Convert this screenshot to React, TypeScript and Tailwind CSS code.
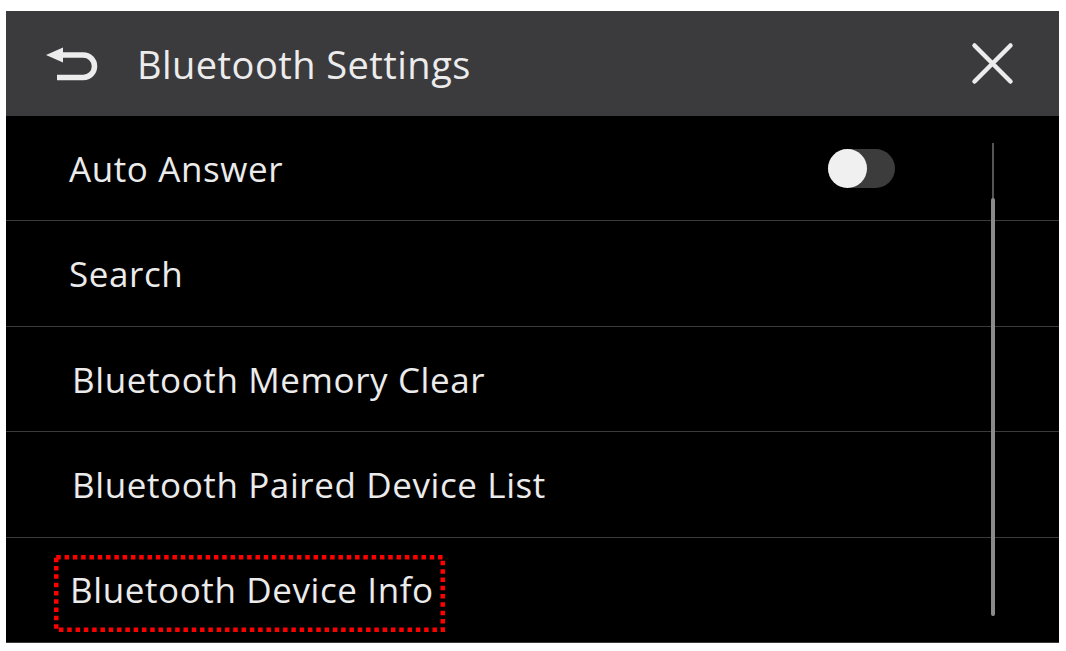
import React from 'react';

const rows = [
  { label: 'Auto Answer', pad: 'pl-[63px]', toggle: true },
  { label: 'Search', pad: 'pl-[63px]' },
  { label: 'Bluetooth Memory Clear', pad: 'pl-[66px]' },
  { label: 'Bluetooth Paired Device List', pad: 'pl-[66px]' },
  { label: 'Bluetooth Device Info', pad: 'pl-[64px]', marked: true },
];

function BackIcon() {
  return (
    <svg width="64" height="48" viewBox="0 0 64 48" className="shrink-0">
      <path d="M6 15 L23 7.5 L23 22.5 Z" fill="#ececec" />
      <path
        d="M21 15 H43.25 A11.25 11.25 0 0 1 43.25 37.5 H17"
        fill="none"
        stroke="#ececec"
        strokeWidth="5.5"
      />
    </svg>
  );
}

function CloseIcon() {
  return (
    <svg width="50" height="50" viewBox="0 0 50 50" className="shrink-0">
      <path
        d="M6.5 6.5 L42.5 42.5 M42.5 6.5 L6.5 42.5"
        stroke="#ececec"
        strokeWidth="4.5"
        strokeLinecap="round"
      />
    </svg>
  );
}

export default function App() {
  return (
    <div className="w-[1066px] h-[651px] bg-white pt-[11px] pl-[6px] font-['Open_Sans',sans-serif]">
      <div className="w-[1053px] h-[632px] bg-black flex flex-col">
        {/* header */}
        <header className="h-[105px] shrink-0 bg-[#3b3b3e] flex items-center pl-[34px] pr-[41px]">
          <BackIcon />
          <h1 className="ml-[33px] text-[38px] leading-none tracking-[0.45px] text-[#ececec] font-normal">
            Bluetooth Settings
          </h1>
          <div className="ml-auto">
            <CloseIcon />
          </div>
        </header>

        {/* list */}
        <div className="relative flex-1 flex flex-col border-b border-[#3a3a3a]">
          {rows.map((row, i) => (
            <div
              key={row.label}
              className={`relative flex-1 flex items-center justify-between pr-[164px] ${row.pad} ${
                i > 0 ? 'border-t border-[#3a3a3a]' : ''
              }`}
            >
              <span className="text-[35px] leading-none tracking-[0.6px] text-[#ebebeb]">{row.label}</span>
              {row.toggle && (
                <div className="w-[67px] h-[39px] rounded-full bg-[#3c3c3c] flex items-center">
                  <div className="w-[39px] h-[39px] rounded-full bg-[#f0f0f0]" />
                </div>
              )}
              {row.marked && (
                <svg
                  width="391"
                  height="77"
                  className="absolute left-[48px] top-[17px] pointer-events-none"
                >
                  <rect
                    x="2.25"
                    y="2.25"
                    width="386.5"
                    height="72.5"
                    fill="none"
                    stroke="#ff0000"
                    strokeWidth="4.5"
                    strokeDasharray="4.5 3.8"
                  />
                </svg>
              )}
            </div>
          ))}

          {/* scroll indicator */}
          <div className="absolute left-[986px] top-[27px] w-[2px] h-[473px] bg-[#555555]" />
          <div className="absolute left-[985px] top-[82px] w-[4px] h-[418px] rounded-full bg-[#8a8a8a]" />
        </div>
      </div>
    </div>
  );
}
